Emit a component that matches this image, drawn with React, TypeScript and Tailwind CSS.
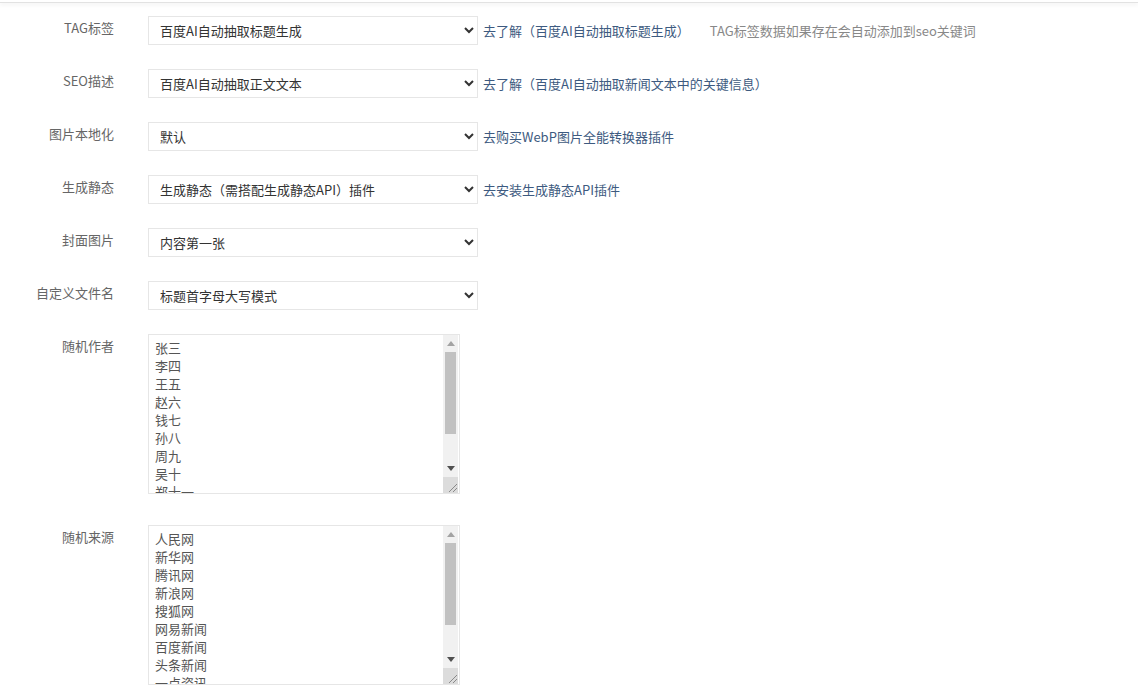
import type { ReactNode } from "react";

const FONT = '"Microsoft YaHei", "Noto Sans CJK SC", "Noto Sans", sans-serif';

type SelectRow = {
  label: string;
  value: string;
  options: string[];
  link?: string;
  note?: string;
};

const selectRows: SelectRow[] = [
  {
    label: "TAG标签",
    value: "百度AI自动抽取标题生成",
    options: ["百度AI自动抽取标题生成", "关闭"],
    link: "去了解（百度AI自动抽取标题生成）",
    note: "TAG标签数据如果存在会自动添加到seo关键词",
  },
  {
    label: "SEO描述",
    value: "百度AI自动抽取正文文本",
    options: ["百度AI自动抽取正文文本", "截取正文前200字"],
    link: "去了解（百度AI自动抽取新闻文本中的关键信息）",
  },
  {
    label: "图片本地化",
    value: "默认",
    options: ["默认", "WebP"],
    link: "去购买WebP图片全能转换器插件",
  },
  {
    label: "生成静态",
    value: "生成静态（需搭配生成静态API）插件",
    options: ["生成静态（需搭配生成静态API）插件", "不生成"],
    link: "去安装生成静态API插件",
  },
  {
    label: "封面图片",
    value: "内容第一张",
    options: ["内容第一张", "不设置"],
  },
  {
    label: "自定义文件名",
    value: "标题首字母大写模式",
    options: ["标题首字母大写模式", "拼音模式", "默认"],
  },
];

const authors = [
  "张三", "李四", "王五", "赵六", "钱七", "孙八", "周九", "吴十",
  "郑十一", "王十二", "冯十三", "陈十四", "褚十五", "卫十六",
];

const sources = [
  "人民网", "新华网", "腾讯网", "新浪网", "搜狐网", "网易新闻", "百度新闻",
  "头条新闻", "一点资讯", "凤凰网", "澎湃新闻", "环球网", "中国新闻网", "央视网",
];

function Label({ children }: { children: ReactNode }) {
  return (
    <div className="w-[114px] shrink-0 pt-[2px] text-right text-[13px] leading-[20px] text-[#666]">
      {children}
    </div>
  );
}

// classic-looking scrollbar drawn over the textarea (headless chrome uses overlay bars)
function FakeScrollbar() {
  return (
    <div className="pointer-events-none absolute top-[1px] right-[2px] bottom-[1px] flex w-[15px] flex-col bg-[#f1f1f1]">
      <div className="flex h-[17px] items-center justify-center">
        <svg width="8" height="5" viewBox="0 0 8 5">
          <path d="M0 5 L4 0 L8 5 Z" fill="#a3a3a3" />
        </svg>
      </div>
      <div className="mx-[2px] h-[82px] bg-[#c1c1c1]" />
      <div className="flex-1" />
      <div className="flex h-[17px] items-center justify-center">
        <svg width="8" height="5" viewBox="0 0 8 5">
          <path d="M0 0 L8 0 L4 5 Z" fill="#505050" />
        </svg>
      </div>
      <div className="relative h-[16px] bg-[#dcdcdc]">
        <svg className="absolute right-[1px] bottom-[1px]" width="9" height="9" viewBox="0 0 9 9">
          <path d="M9 1 L1 9 M9 5 L5 9" stroke="#8a8a8a" strokeWidth="1" />
        </svg>
      </div>
    </div>
  );
}

function ListBox({ lines }: { lines: string[] }) {
  return (
    <div className="relative ml-[34px] h-[160px] w-[312px]">
      <textarea
        defaultValue={lines.join("\n")}
        className="h-full w-full resize-none overflow-hidden border border-[#e6e6e6] bg-white px-[6px] py-[4px] text-[13px] leading-[18px] text-[#555] outline-none"
        style={{ fontFamily: FONT }}
      />
      <FakeScrollbar />
    </div>
  );
}

export default function App() {
  return (
    <div className="min-h-screen bg-white" style={{ fontFamily: FONT }}>
      <div className="h-[3px] border-b border-[#e2e2e2] shadow-[0_2px_4px_rgba(0,0,0,0.06)]" />
      <div className="flex flex-col pt-[13px]">
        {selectRows.map((row) => (
          <div key={row.label} className="mb-[24px] flex items-start">
            <Label>{row.label}</Label>
            <select
              defaultValue={row.value}
              className="ml-[34px] h-[29px] w-[330px] shrink-0 border border-[#e6e6e6] bg-white pl-[7px] pr-[6px] text-[13px] text-[#333] outline-none"
              style={{ fontFamily: FONT }}
            >
              {row.options.map((o) => (
                <option key={o}>{o}</option>
              ))}
            </select>
            {row.link && (
              <div className="flex h-[29px] items-center pl-[5px] text-[13px] whitespace-nowrap">
                <a className="text-[#3d5a80]">{row.link}</a>
                {row.note && <span className="ml-[20px] text-[#888]">{row.note}</span>}
              </div>
            )}
          </div>
        ))}

        <div className="flex items-start">
          <Label>随机作者</Label>
          <ListBox lines={authors} />
        </div>

        <div className="mt-[31px] flex items-start">
          <Label>随机来源</Label>
          <ListBox lines={sources} />
        </div>
      </div>
    </div>
  );
}
